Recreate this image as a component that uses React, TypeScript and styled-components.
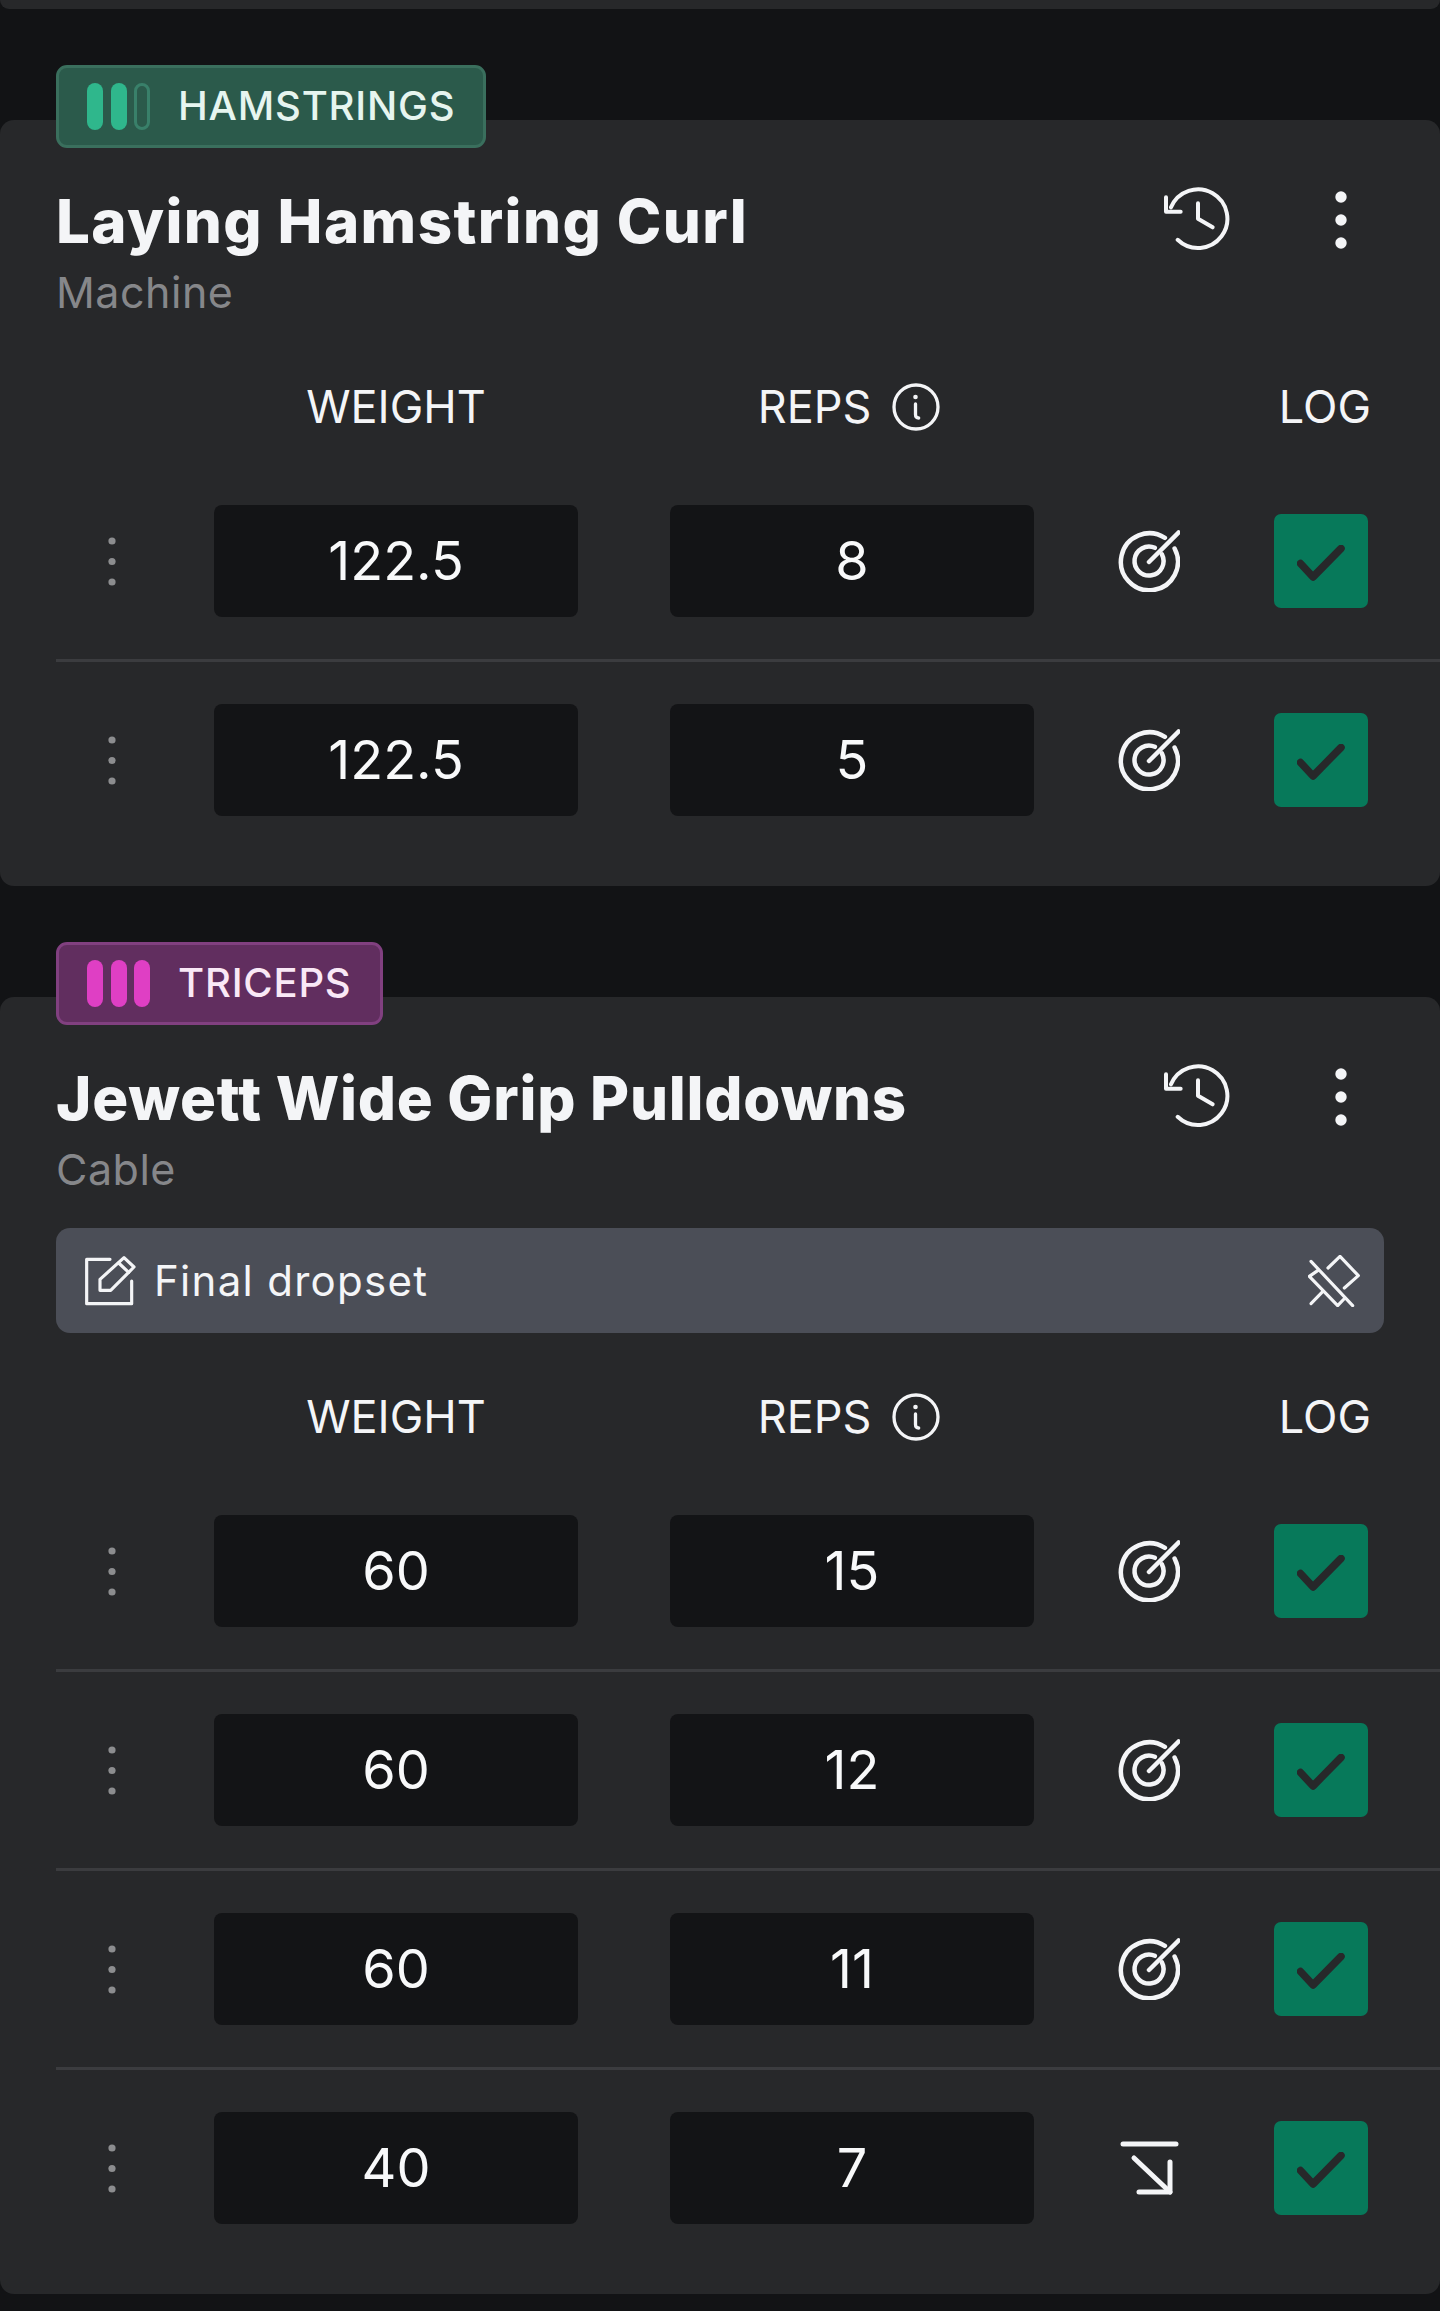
import styled, { createGlobalStyle } from "styled-components";

const GlobalStyle = createGlobalStyle`
  html, body {
    margin: 0;
    padding: 0;
    background: #121315;
  }

  body {
    font-family: Inter, "Noto Sans", sans-serif;
    color: #f4f5f7;
  }
`;

type SetRow = { weight: string; reps: string; dropset?: boolean };

type Exercise = {
  muscle: string;
  tone: "green" | "pink";
  title: string;
  tracking: number;
  kind: string;
  note?: string;
  sets: SetRow[];
};

const exercises: Exercise[] = [
  {
    muscle: "HAMSTRINGS",
    tone: "green",
    title: "Laying Hamstring Curl",
    tracking: 1.4,
    kind: "Machine",
    sets: [
      { weight: "122.5", reps: "8" },
      { weight: "122.5", reps: "5" },
    ],
  },
  {
    muscle: "TRICEPS",
    tone: "pink",
    title: "Jewett Wide Grip Pulldowns",
    tracking: 0.75,
    kind: "Cable",
    note: "Final dropset",
    sets: [
      { weight: "60", reps: "15" },
      { weight: "60", reps: "12" },
      { weight: "60", reps: "11" },
      { weight: "40", reps: "7", dropset: true },
    ],
  },
];

const tones = {
  green: { bg: "#2b5a4b", border: "#3a6f5d", bar: "#2fb78c", idle: "#39806a", text: "#e6f5ef" },
  pink: { bg: "#612e5f", border: "#814080", bar: "#df3fc4", idle: "#df3fc4", text: "#f9e8f6" },
};

const HistoryIcon = () => (
  <svg width="68" height="68" viewBox="190 78 204 204" fill="none" stroke="#f4f5f7" strokeWidth="12" strokeLinecap="round" strokeLinejoin="round">
    <path d="M234 239.400A88 88 0 1 0 214 142" />
    <path d="M199 112v43h44" />
    <path d="M295 130v46l44 26" />
  </svg>
);

const MoreIcon = () => (
  <svg width="12" height="58" viewBox="0 0 12 58" fill="#f4f5f7">
    <circle cx="6" cy="6" r="5.700" />
    <circle cx="6" cy="29" r="5.700" />
    <circle cx="6" cy="52" r="5.700" />
  </svg>
);

const InfoIcon = () => (
  <svg width="48" height="48" viewBox="0 0 48 48" fill="none" stroke="#f4f5f7" strokeWidth="3.300" strokeLinecap="round">
    <circle cx="24" cy="24" r="22" />
    <circle cx="23.500" cy="14" r="2.300" fill="#f4f5f7" stroke="none" />
    <path d="M23.500 21v10.500c0 2 1.200 3.500 3.200 3.500" />
  </svg>
);

const GripIcon = () => (
  <svg width="8" height="49" viewBox="0 0 8 49" fill="#8c8d8f">
    <circle cx="4" cy="4" r="3.600" />
    <circle cx="4" cy="24.500" r="3.600" />
    <circle cx="4" cy="45" r="3.600" />
  </svg>
);

const TargetIcon = () => (
  <svg width="62" height="62" viewBox="0 0 62 62" fill="none" stroke="#f4f5f7" strokeWidth="4.500" strokeLinecap="round">
    <path d="M46.900 7.900A28.500 28.500 0 1 0 56.600 18.500" />
    <path d="M36.900 17.800A14.500 14.500 0 1 0 43.900 24.400" />
    <path d="M31 32L60.500 2.500" />
  </svg>
);

const DropIcon = () => (
  <svg width="62" height="62" viewBox="1118 2134 62 62" fill="none" stroke="#f4f5f7" strokeWidth="5" strokeLinecap="round" strokeLinejoin="round">
    <path d="M1123 2141h53" />
    <path d="M1134 2155l36 34" />
    <path d="M1170 2159v30h-31" />
  </svg>
);

const CheckIcon = () => (
  <CheckGlyph width="48" height="36" viewBox="0 0 48 36" fill="none" stroke="#27282a" strokeWidth="7.500" strokeLinecap="round" strokeLinejoin="round">
    <path d="M3.500 18.500L16 32 44 3.500" />
  </CheckGlyph>
);

const NoteIcon = () => (
  <svg width="52" height="52" viewBox="250 132 156 156" fill="none" stroke="#f4f5f7" strokeWidth="9.500" strokeLinecap="round" strokeLinejoin="round">
    <path d="M328 145h-70v133h135v-68" />
    <path d="M370 140l30 28-70 70h-32v-33z" />
    <path d="M354 156l30 28" />
  </svg>
);

const PinOffIcon = () => (
  <svg width="52" height="52" viewBox="204 126 156 156" fill="none" stroke="#f4f5f7" strokeWidth="9.500" strokeLinecap="round" strokeLinejoin="round">
    <path d="M213 145l125 133" />
    <path d="M234 172l-26 18 85 88 19-20" />
    <path d="M264 165l36-35 55 58-42 37" />
    <path d="M213 272l35-36" />
  </svg>
);

const TagBadge = ({ exercise }: { exercise: Exercise }) => (
  <Tag $tone={exercise.tone}>
    <Bars>
      <Bar $tone={exercise.tone} />
      <Bar $tone={exercise.tone} />
      <Bar $tone={exercise.tone} $idle={exercise.tone === "green"} />
    </Bars>
    <TagText>{exercise.muscle}</TagText>
  </Tag>
);

const ExerciseCard = ({ exercise }: { exercise: Exercise }) => (
  <Section>
    <TagBadge exercise={exercise} />
    <Card>
      <TitleRow>
        <div>
          <Title $tracking={exercise.tracking}>{exercise.title}</Title>
          <Kind>{exercise.kind}</Kind>
        </div>
        <Actions>
          <HistoryIcon />
          <MoreIcon />
        </Actions>
      </TitleRow>

      {exercise.note && (
        <Note>
          <NoteIcon />
          <NoteText>{exercise.note}</NoteText>
          <PinOffIcon />
        </Note>
      )}

      <ColumnHeads>
        <span />
        <HeadLabel>WEIGHT</HeadLabel>
        <RepsLabel>
          REPS
          <InfoIcon />
        </RepsLabel>
        <span />
        <LogLabel>LOG</LogLabel>
      </ColumnHeads>

      {exercise.sets.map((set, i) => (
        <SetLine key={i} $last={i === exercise.sets.length - 1}>
          <Grip>
            <GripIcon />
          </Grip>
          <ValueBox>{set.weight}</ValueBox>
          <ValueBox>{set.reps}</ValueBox>
          {set.dropset ? <DropIcon /> : <TargetIcon />}
          <CheckBox>
            <CheckIcon />
          </CheckBox>
        </SetLine>
      ))}
    </Card>
  </Section>
);

export default function App() {
  return (
    <Page>
      <GlobalStyle />
      <PrevCard />
      {exercises.map(exercise => (
        <ExerciseCard key={exercise.title} exercise={exercise} />
      ))}
    </Page>
  );
}

const Page = styled.div`
  width: 1440px;
  height: 2311px;
  overflow: hidden;
  background: #121315;
`;

const PrevCard = styled.div`
  height: 9px;
  background: #27282a;
  border-radius: 0 0 14px 14px;
`;

const Section = styled.section`
  display: flex;
  flex-direction: column;
  padding-top: 56px;
`;

const Tag = styled.div<{ $tone: "green" | "pink" }>`
  position: relative;
  z-index: 1;
  align-self: flex-start;
  box-sizing: border-box;
  display: flex;
  align-items: center;
  gap: 28px;
  height: 83px;
  margin: 0 0 -28px 56px;
  padding: 0 28px;
  background: ${p => tones[p.$tone].bg};
  border: 3px solid ${p => tones[p.$tone].border};
  border-radius: 11px;
  color: ${p => tones[p.$tone].text};
`;

const TagText = styled.span`
  padding-bottom: 2px;
  font-size: 40px;
  letter-spacing: 0.8px;
  font-weight: 550;
`;

const Bars = styled.div`
  display: flex;
  gap: 7.500px;
`;

const Bar = styled.div<{ $tone: "green" | "pink"; $idle?: boolean }>`
  box-sizing: border-box;
  width: 16px;
  height: 47px;
  border-radius: 8px;
  background: ${p => (p.$idle ? "transparent" : tones[p.$tone].bar)};
  border: ${p => (p.$idle ? `3px solid ${tones[p.$tone].idle}` : "none")};
`;

const Card = styled.div`
  background: #27282a;
  border-radius: 14px;
  padding: 65px 0 28px 56px;
`;

const TitleRow = styled.div`
  display: flex;
  justify-content: space-between;
  align-items: flex-start;
  padding-bottom: 33px;
`;

const Title = styled.h2<{ $tracking: number }>`
  margin: 0;
  font-size: 60px;
  line-height: 72px;
  font-weight: 800;
  letter-spacing: ${p => p.$tracking}px;
  color: #f4f5f7;
`;

const Kind = styled.div`
  margin-top: 9px;
  font-size: 43px;
  line-height: 52px;
  letter-spacing: 0.5px;
  color: #86878a;
`;

const Actions = styled.div`
  display: flex;
  align-items: center;
  gap: 103.700px;
  margin: 1px 93px 0 0;
`;

const Note = styled.div`
  display: flex;
  align-items: center;
  box-sizing: border-box;
  width: 1328px;
  height: 105px;
  margin-bottom: 56px;
  padding: 0 24px 0 28px;
  background: #4b4e57;
  border-radius: 14px;
`;

const NoteText = styled.span`
  flex: 1;
  margin-left: 18px;
  font-size: 42px;
  letter-spacing: 1.3px;
  color: #f4f5f7;
`;

const ColumnHeads = styled.div`
  display: grid;
  grid-template-columns: 158px 456px 448px 156px 94px;
  align-items: center;
  height: 48px;
  margin: 28px 0 36px;
`;

const HeadLabel = styled.div`
  display: flex;
  align-items: center;
  justify-content: center;
  gap: 21px;
  width: 364px;
  font-size: 45px;
  color: #f4f5f7;
`;

const RepsLabel = styled(HeadLabel)`
  padding-right: 6px;
  box-sizing: border-box;
`;

const LogLabel = styled.div`
  margin-right: -3px;
  font-size: 45px;
  text-align: right;
  color: #f4f5f7;
`;

const SetLine = styled.div<{ $last: boolean }>`
  display: grid;
  grid-template-columns: 158px 456px 448px 156px 94px;
  align-items: center;
  padding: 42px 0;
  border-bottom: ${p => (p.$last ? "none" : "3px solid #3b3c3f")};
`;

const Grip = styled.div`
  display: flex;
  padding-left: 52px;
`;

const ValueBox = styled.div`
  display: flex;
  align-items: center;
  justify-content: center;
  box-sizing: border-box;
  width: 364px;
  height: 112px;
  padding-bottom: 2px;
  background: #131416;
  border-radius: 8px;
  font-size: 54px;
  color: #f8f9fa;
`;

const CheckBox = styled.div`
  display: flex;
  align-items: center;
  justify-content: center;
  width: 94px;
  height: 94px;
  background: #07795a;
  border-radius: 7px;
`;

const CheckGlyph = styled.svg`
  margin-top: 4px;
`;
